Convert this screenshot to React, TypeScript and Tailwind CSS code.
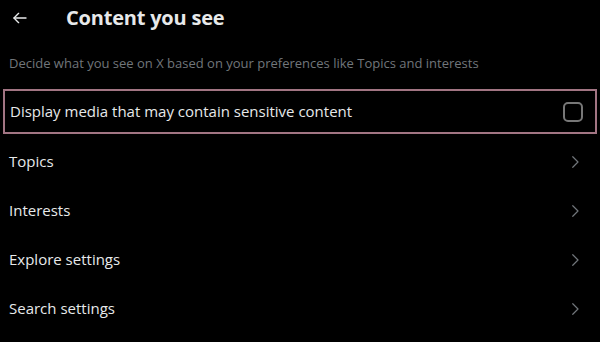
import React from "react";

const ROWS = ["Topics", "Interests", "Explore settings", "Search settings"];

function Chevron() {
  return (
    <svg viewBox="0 0 24 24" className="w-[18px] h-[18px] text-[#71767b]" fill="none" stroke="currentColor" strokeWidth="1.6" strokeLinecap="round" strokeLinejoin="round">
      <polyline points="9 5 16 12 9 19" />
    </svg>
  );
}

export default function App() {
  return (
    <div className="w-[600px] h-[342px] bg-black text-[#e7e9ea] overflow-hidden" style={{ fontFamily: '"Segoe UI", "Open Sans", "Liberation Sans", sans-serif' }}>
      <div className="flex items-center h-[36px] pl-[12px]">
        <svg viewBox="0 0 24 24" className="w-[16px] h-[16px]" fill="none" stroke="currentColor" strokeWidth="2" strokeLinecap="round" strokeLinejoin="round">
          <line x1="21" y1="12" x2="3" y2="12" />
          <polyline points="10 5 3 12 10 19" />
        </svg>
        <h1 className="ml-[38px] text-[20px] font-bold tracking-[-0.2px]">Content you see</h1>
      </div>
      <p className="px-[9px] mt-[18px] text-[13px] leading-[18px] text-[#71767b]">
        Decide what you see on X based on your preferences like Topics and interests
      </p>
      <div className="mx-[3px] mt-[17px] h-[45px] border-2 border-[#a27583] flex items-center justify-between pl-[5px] pr-[12px]">
        <span className="text-[15px]">Display media that may contain sensitive content</span>
        <div className="w-[20px] h-[20px] rounded-[5px] border-2 border-[#777777]" />
      </div>
      <div className="flex flex-col mt-[3px]">
        {ROWS.map((r) => (
          <div key={r} className="h-[49px] flex items-center justify-between pl-[9px] pr-[16px]">
            <span className="text-[15px]">{r}</span>
            <Chevron />
          </div>
        ))}
      </div>
    </div>
  );
}
